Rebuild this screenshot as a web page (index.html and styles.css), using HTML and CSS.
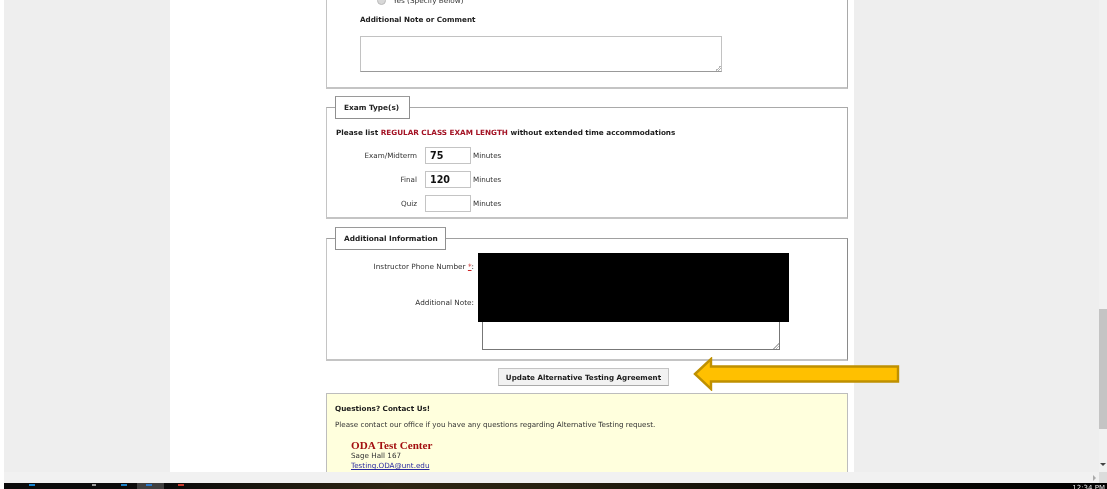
FILE: index.html
```html
<!DOCTYPE html>
<html lang="en">
<head>
<meta charset="utf-8">
<title>Alternative Testing Agreement</title>
<link rel="stylesheet" href="styles.css">
</head>
<body>
<div class="window">
  <div class="viewport">
    <div class="page">
      <div class="sheet">
        <fieldset class="box box-first">
          <div class="radio-row"><span class="radio"></span><span>Yes (Specify Below)</span></div>
          <p class="note-label">Additional Note or Comment</p>
          <textarea class="note-area"></textarea>
        </fieldset>
        <fieldset class="box box-exam">
          <legend class="legend">Exam Type(s)</legend>
          <p class="instruction">Please list <span class="red">REGULAR CLASS EXAM LENGTH</span> without extended time accommodations</p>
          <div class="exam-grid">
            <label class="exam-label">Exam/Midterm</label><input class="exam-input" value="75"><span>Minutes</span>
            <label class="exam-label">Final</label><input class="exam-input" value="120"><span>Minutes</span>
            <label class="exam-label">Quiz</label><input class="exam-input" value=""><span>Minutes</span>
          </div>
        </fieldset>
        <fieldset class="box box-info">
          <legend class="legend legend-wide">Additional Information</legend>
          <div class="info-grid">
            <label class="info-label info-phone">Instructor Phone Number <span class="req">*</span>:</label>
            <input class="info-input">
            <label class="info-label info-note">Additional Note:</label>
            <textarea class="info-area"></textarea>
          </div>
          <div class="redaction"></div>
        </fieldset>
        <div class="actions"><button class="update" type="button">Update Alternative Testing Agreement</button></div>
        <div class="contact">
          <p class="contact-title">Questions? Contact Us!</p>
          <p class="contact-text">Please contact our office if you have any questions regarding Alternative Testing request.</p>
          <div class="address">
            <div class="office">ODA Test Center</div>
            <div>Sage Hall 167</div>
            <div><a class="mail" href="#">Testing.ODA@unt.edu</a></div>
            <div>940-369-5626</div>
          </div>
        </div>
      </div>
      <svg class="arrow" width="207" height="34" viewBox="0 0 207 34">
        <path d="M2 17 L18 2 V9.5 H205 V24.5 H18 V32 Z" fill="#ffc000" stroke="#bf9000" stroke-width="2.4"/>
      </svg>
    </div>
    <div class="vscroll">
      <div class="thumb"></div>
      <div class="down"></div>
    </div>
  </div>
  <div class="hscroll"><span class="right-arrow"></span><span class="corner"></span></div>
  <div class="taskbar">
    <span class="tb tb-a"></span>
    <span class="tb tb-b"></span>
    <span class="tb tb-c"></span>
    <span class="tb-active"><span class="tb tb-d"></span></span>
    <span class="tb tb-e"></span>
    <span class="clock">12:34 PM</span>
  </div>
</div>
</body>
</html>
```
FILE: styles.css
```css
* { box-sizing: border-box; }
html, body { margin: 0; padding: 0; height: 100%; overflow: hidden; background: #fff; }
body { font-family: "DejaVu Sans", Verdana, sans-serif; font-size: 7.3px; color: #222; }
p { margin: 0; }

.window { width: 1107px; height: 489px; display: flex; flex-direction: column; overflow: hidden; filter: blur(0.4px); }
.viewport { flex: 0 0 472px; display: flex; overflow: hidden; padding-left: 4px; background: #fff; }
.page { position: relative; flex: 1; background: #eeeeee; overflow: hidden; }
.sheet { display: flow-root; width: 684px; height: 100%; margin-left: 166px; padding: 0 6px 0 156px; background: #fff; }

.box { margin: 0; padding: 0; border: 1px solid #a9a9a9; border-bottom-width: 2px; border-bottom-color: #c4c4c4; border-left-color: #c4c4c4; background: #fff; min-width: 0; }
.box-first { height: 103px; margin-top: -14px; padding: 10px 0 0 33px; border-top: 0; }
.radio-row { display: flex; align-items: center; gap: 7px; height: 9px; padding-left: 17px; color: #333; }
.radio { width: 9px; height: 9px; border-radius: 50%; background: #d8d8d8; border: 1px solid #bbb; }
.note-label { margin-top: 9px; font-weight: 700; font-size: 7.2px; line-height: 12px; color: #222; }
.note-area { display: block; width: 362px; height: 36px; margin-top: 10px; border: 1px solid #c2c2c2; border-bottom-color: #999; padding: 0; background: #fff; }
textarea::-webkit-resizer { background: linear-gradient(135deg, transparent 50%, #b5b5b5 50%, #b5b5b5 60%, transparent 60%, transparent 72%, #b5b5b5 72%, #b5b5b5 82%, transparent 82%) no-repeat right bottom / 6px 6px; }

.legend { width: 75px; height: 23px; margin-left: 8px; padding: 0 0 0 8px; border: 1px solid #8f8f8f; border-top-color: #9a9a9a; background: #fff; font-weight: 700; font-size: 7.35px; line-height: 21px; text-align: left; white-space: nowrap; color: #222; }
.legend-wide { width: 111px; }
.box-exam { height: 123px; margin-top: 7px; padding: 0; }
.instruction { margin-top: 8px; padding-left: 9px; font-weight: 700; font-size: 7.25px; line-height: 12px; color: #1c1c1c; }
.red { color: #a31224; }
.exam-grid { display: grid; grid-template-columns: 89px 46px auto; grid-auto-rows: 17px; row-gap: 7px; align-items: center; margin-top: 8px; padding-left: 9px; font-size: 7.2px; color: #333; }
.exam-grid span { padding-left: 2px; }
.exam-label { text-align: right; padding-right: 8px; }
.exam-input { width: 46px; height: 17px; padding: 0 0 0 4px; border: 1px solid #c4c4c4; background: #fff; font: 700 9.6px "DejaVu Sans", sans-serif; color: #111; outline: 0; }

.box-info { position: relative; height: 134px; margin-top: 8px; padding: 0; border-top-color: #a0a0a0; border-right-color: #8a8a8a; }
.info-grid { display: grid; grid-template-columns: 147px 298px; align-items: start; column-gap: 8px; }
.info-label { text-align: right; font-size: 7.3px; color: #333; line-height: 12px; }
.req { color: #c22; text-decoration: underline; }
.info-phone { margin-top: 11px; }
.info-input { margin-top: 7px; width: 298px; height: 18px; border: 1px solid #bbb; }
.info-note { margin-top: 22px; }
.info-area { display: block; width: 298px; height: 55px; margin-top: 20px; padding: 0; border: 1px solid #777; background: #fff; }
.redaction { position: absolute; left: 151px; top: 3px; width: 311px; height: 69px; background: #000; }

.actions { display: flex; justify-content: center; height: 32px; padding: 7px 7px 0 0; }
.update { width: 171px; height: 18px; padding: 0; border: 1px solid #c4c4c4; border-bottom-color: #aaa; background: #f2f2f2; font: 700 7.15px "DejaVu Sans", sans-serif; white-space: nowrap; color: #1c1c1c; }

.contact { height: 90px; padding: 10px 8px 0; background: #ffffdd; border: 1px solid #bdbdbd; overflow: hidden; }
.contact-title { font-weight: 700; font-size: 7.24px; line-height: 10px; color: #1c1c1c; }
.contact-text { margin-top: 6px; font-size: 7.17px; line-height: 10px; color: #333; }
.address { margin: 9px 0 0 16px; font-size: 7.2px; line-height: 10px; color: #333; }
.office { font: 700 11.1px "Liberation Serif", serif; line-height: 12px; color: #a31010; }
.mail { color: #2a2aa0; }

.arrow { position: absolute; left: 689px; top: 357px; }

.vscroll { position: relative; flex: 0 0 8px; background: #f1f1f1; }
.thumb { position: absolute; left: 0; right: 0; top: 309px; height: 120px; background: #c4c4c4; }
.down { position: absolute; left: 1px; bottom: 6px; width: 0; height: 0; border-left: 3px solid transparent; border-right: 3px solid transparent; border-top: 3px solid #444; }

.hscroll { flex: 0 0 11px; display: flex; justify-content: flex-end; align-items: center; margin-left: 4px; background: #f1f1f1; }
.right-arrow { width: 0; height: 0; margin-right: 3px; border-top: 3px solid transparent; border-bottom: 3px solid transparent; border-left: 3px solid #aaa; }
.corner { width: 8px; height: 11px; background: #dcdcdc; }

.taskbar { position: relative; flex: 0 0 6px; display: flex; align-items: flex-start; margin-left: 4px; overflow: hidden; background: linear-gradient(90deg, #0b0b0b 0, #0b0b0b 15%, #2e2613 35%, #26200f 50%, #0b0a05 75%, #000 100%); }
.tb { display: block; height: 2px; width: 6px; margin-top: 1px; }
.tb-a { margin-left: 25px; background: #1583cf; }
.tb-b { margin-left: 57px; width: 4px; background: #9a9a9a; }
.tb-c { margin-left: 25px; background: #1a7fc4; }
.tb-active { width: 27px; height: 6px; margin-left: 10px; background: #3f3f3f; }
.tb-d { margin-left: 9px; background: #2a78c8; }
.tb-e { margin-left: 14px; background: #c8382c; }
.clock { position: absolute; right: 2px; top: 1px; color: #e8e8e8; font-size: 7px; line-height: 8px; }
```
